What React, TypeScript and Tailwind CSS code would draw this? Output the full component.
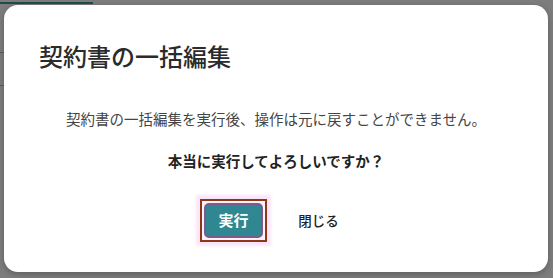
export default function App() {
  return (
    <div
      className="relative h-[278px] w-[553px] overflow-hidden bg-[#7d7d7d] pl-[4px] pt-[5px]"
      style={{ fontFamily: '"Noto Sans CJK JP", "Noto Sans", sans-serif' }}
    >
      {/* faint page behind overlay */}
      <div className="absolute left-0 top-[2px] h-[2px] w-[93px] bg-[#1d4a4a]" />
      <div className="absolute left-0 top-[52px] h-px w-[4px] bg-[#555]" />
      <div className="absolute left-0 top-[85px] h-px w-[4px] bg-[#555]" />

      <div className="flex h-[267px] w-[544px] flex-col rounded-[14px] bg-white shadow-[0_2px_6px_rgba(0,0,0,0.25)]">
        <h2 className="pl-[35px] pt-[35px] text-[24px] leading-[32px] font-medium text-[#2b2b2b]">
          契約書の一括編集
        </h2>
        <p className="mt-[35px] text-center text-[14.5px] leading-[24px] text-[#444]">
          契約書の一括編集を実行後、操作は元に戻すことができません。
        </p>
        <p className="mt-[18px] text-center text-[14.5px] leading-[24px] font-bold text-[#222]">
          本当に実行してよろしいですか？
        </p>
        <div className="mt-[30px] flex justify-center gap-[26px]">
          <div className="relative h-[35px] w-[59px]">
            <div className="absolute -inset-[4px] border-2 border-[#8a3a12] bg-[#fdf2fd] shadow-[0_0_3px_4px_#fce4fb]" />
            <button className="relative h-[35px] w-[59px] rounded-[5px] border-2 border-[#7e5a8e] bg-[#2f8791] text-[15px] font-bold text-white">
              実行
            </button>
          </div>
          <button className="h-[35px] w-[59px] text-[13.5px] font-medium text-[#222]">
            閉じる
          </button>
        </div>
      </div>
    </div>
  );
}
